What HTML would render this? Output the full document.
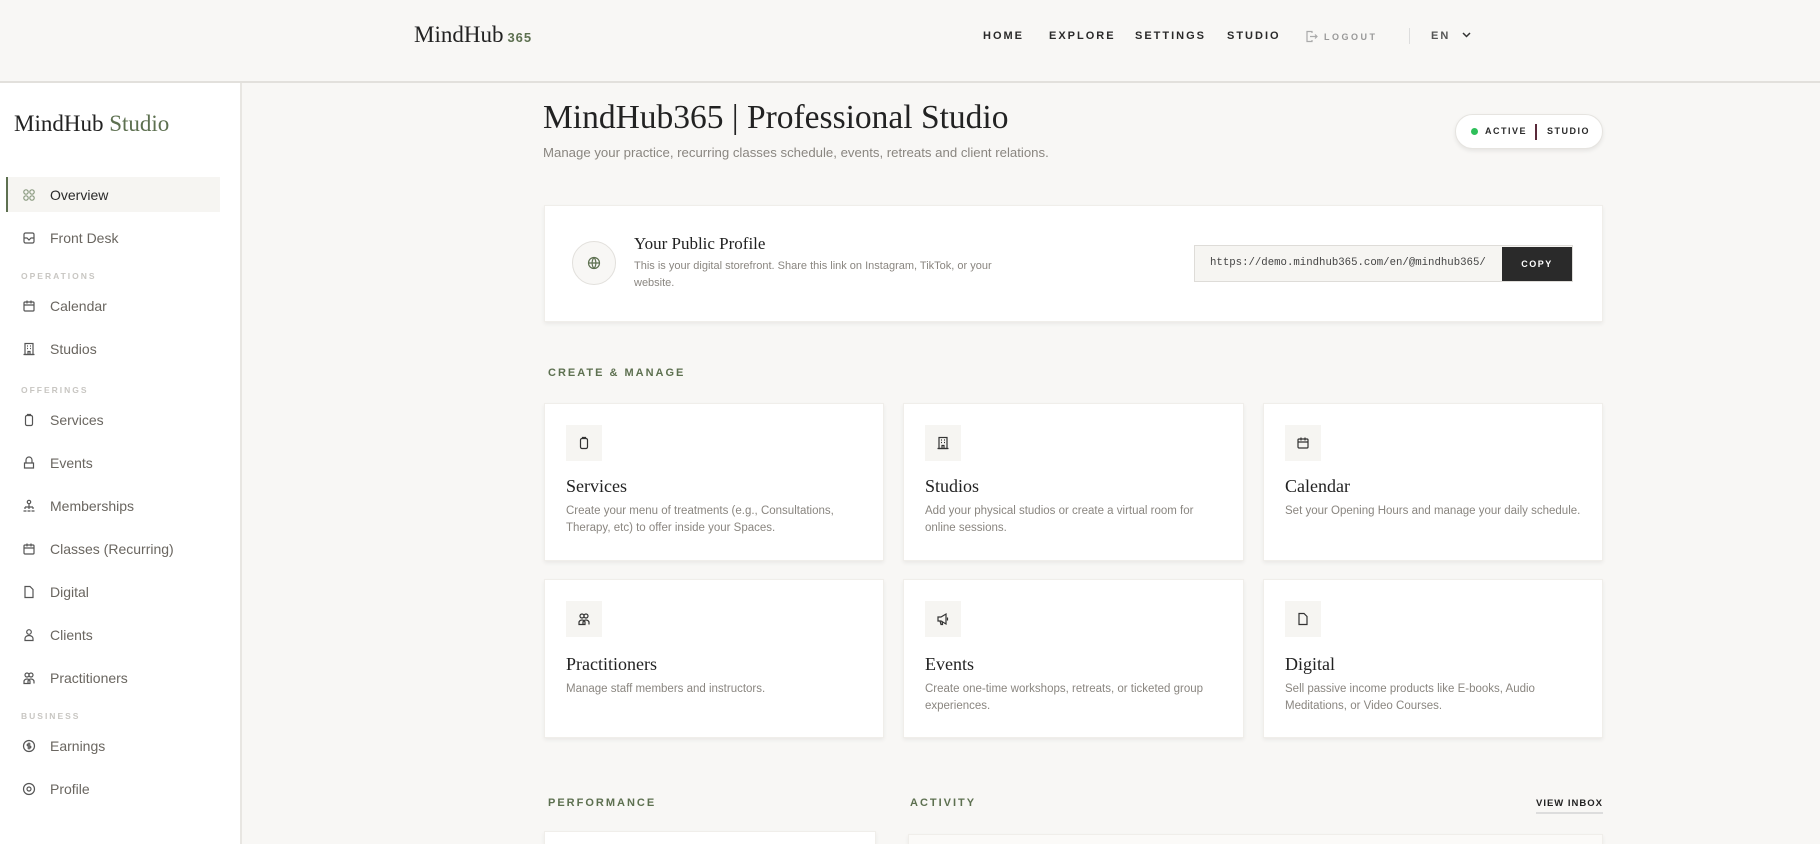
<!DOCTYPE html>
<html><head><meta charset="utf-8"><style>
*{margin:0;padding:0;box-sizing:border-box}
html,body{width:1820px;height:844px;overflow:hidden}
body{background:#f8f7f5;font-family:"Liberation Sans",sans-serif;color:#2a2a2a;position:relative}
.abs{position:absolute}
.hdr{left:0;top:0;width:1820px;height:83px;border-bottom:2px solid #e2e0dc;background:#f8f7f5}
.logo{left:414px;top:22px;font-family:"Liberation Serif",serif;font-size:23px;color:#222}
.logo span{font-family:"Liberation Sans",sans-serif;font-size:13px;color:#5d7050;font-weight:bold;letter-spacing:1px;margin-left:4px}
.nav{top:30px;font-size:11px;font-weight:bold;letter-spacing:2px;color:#2a2a2a}
.side{left:0;top:83px;width:242px;height:761px;background:#fff;border-right:2px solid #e8e6e2}
.brand{left:14px;top:111px;font-family:"Liberation Serif",serif;font-size:23px;color:#222}
.brand span{color:#5d7050}
.it{left:50px;font-size:14px;color:#6a6660}
.ic{left:22px;width:14px;height:14px}
.sec{left:21px;font-size:8.5px;letter-spacing:2px;color:#c8c6c2;font-weight:bold}
.card{background:#fff;box-shadow:0 2px 4px rgba(0,0,0,.06);border:1px solid #f0eeea}
.ibox{width:36px;height:36px;background:#f6f5f2;display:flex;align-items:center;justify-content:center}
.ct{font-family:"Liberation Serif",serif;font-size:18px;color:#222}
.cd{font-size:11.5px;color:#8a8680;line-height:17px}
.lbl{font-size:11px;font-weight:bold;letter-spacing:2px;color:#5d7050}
svg{fill:none;stroke:#555;stroke-width:1.2}
</style></head><body>
<div class="abs hdr"></div>
<div class="abs logo">MindHub<span>365</span></div>
<div class="abs nav" style="left:983px">HOME</div>
<div class="abs nav" style="left:1049px">EXPLORE</div>
<div class="abs nav" style="left:1135px">SETTINGS</div>
<div class="abs nav" style="left:1227px">STUDIO</div>
<svg class="abs" style="left:1305px;top:30px" width="13" height="13" viewBox="0 0 13 13"><path d="M7 3V1.5H2v10h5V10M5 6.5h7M10 4.5l2 2-2 2" stroke="#aaa"/></svg>
<div class="abs nav" style="left:1324px;top:32px;font-size:9px;color:#999;letter-spacing:2.5px">LOGOUT</div>
<div class="abs" style="left:1409px;top:28px;width:1px;height:16px;background:#ddd"></div>
<div class="abs nav" style="left:1431px;font-size:11px;color:#555">EN</div>
<svg class="abs" style="left:1462px;top:32px" width="9" height="6" viewBox="0 0 9 6"><path d="M1 1l3.5 3.5L8 1" stroke="#333" stroke-width="1.5"/></svg>

<div class="abs side"></div>
<div class="abs brand">MindHub <span>Studio</span></div>
<div class="abs" style="left:6px;top:177px;width:214px;height:35px;background:#f6f5f2;border-left:2px solid #5d7050"></div>
<svg class="abs ic" style="top:188px" viewBox="0 0 14 14"><circle cx="4" cy="4" r="2.2" stroke="#8a9a80"/><circle cx="10" cy="4" r="2.2" stroke="#8a9a80"/><circle cx="4" cy="10" r="2.2" stroke="#8a9a80"/><circle cx="10" cy="10" r="2.2" stroke="#8a9a80"/></svg>
<div class="abs it" style="top:187px;color:#2a2a2a">Overview</div>
<svg class="abs ic" style="top:231px" viewBox="0 0 14 14"><rect x="2" y="2" width="10" height="10" rx="1.5"/><path d="M2 7h3l2 2 2-2h3"/></svg>
<div class="abs it" style="top:230px">Front Desk</div>
<div class="abs sec" style="top:271px">OPERATIONS</div>
<svg class="abs ic" style="top:299px" viewBox="0 0 14 14"><rect x="2" y="3" width="10" height="9" rx="1"/><path d="M2 6h10M5 1.5v3M9 1.5v3"/></svg>
<div class="abs it" style="top:298px">Calendar</div>
<svg class="abs ic" style="top:342px" viewBox="0 0 14 14"><rect x="3" y="1.5" width="8" height="11"/><path d="M1.5 12.5h11M5 4h1M8 4h1M5 6.5h1M8 6.5h1M6 12.5v-3h2v3"/></svg>
<div class="abs it" style="top:341px">Studios</div>
<div class="abs sec" style="top:385px">OFFERINGS</div>
<svg class="abs ic" style="top:413px" viewBox="0 0 14 14"><rect x="3.5" y="2.5" width="7" height="10" rx="1.5"/><path d="M5.5 2.5V1.5h3v1"/></svg>
<div class="abs it" style="top:412px">Services</div>
<svg class="abs ic" style="top:456px" viewBox="0 0 14 14"><path d="M2.5 7h9v5h-9zM4 7V4a3 3 0 016 0v3"/></svg>
<div class="abs it" style="top:455px">Events</div>
<svg class="abs ic" style="top:499px" viewBox="0 0 14 14"><circle cx="7" cy="3" r="1.7"/><path d="M7 5v3M3 8h8M3 8v2M11 8v2M7 8v2M1.5 12h3M5.5 12h3M9.5 12h3"/></svg>
<div class="abs it" style="top:498px">Memberships</div>
<svg class="abs ic" style="top:542px" viewBox="0 0 14 14"><rect x="2" y="3" width="10" height="9" rx="1"/><path d="M2 6h10M5 1.5v3M9 1.5v3"/></svg>
<div class="abs it" style="top:541px">Classes (Recurring)</div>
<svg class="abs ic" style="top:585px" viewBox="0 0 14 14"><path d="M3 1.5h5l3 3v8H3z"/></svg>
<div class="abs it" style="top:584px">Digital</div>
<svg class="abs ic" style="top:628px" viewBox="0 0 14 14"><circle cx="7" cy="4" r="2.3"/><path d="M3 12.5v-2a4 3 0 018 0v2z"/></svg>
<div class="abs it" style="top:627px">Clients</div>
<svg class="abs ic" style="top:671px" viewBox="0 0 14 14"><circle cx="5" cy="4" r="2"/><circle cx="9" cy="4" r="2"/><path d="M2 12.5v-2a3 2.5 0 016 0v2zM6 12.5v-2a3 2.5 0 016 0v2"/></svg>
<div class="abs it" style="top:670px">Practitioners</div>
<div class="abs sec" style="top:711px">BUSINESS</div>
<svg class="abs ic" style="top:739px" viewBox="0 0 14 14"><circle cx="7" cy="7" r="5.5"/><path d="M8.5 5H6.2a1 1 0 000 2h1.6a1 1 0 010 2H5.5M7 3.5v7"/></svg>
<div class="abs it" style="top:738px">Earnings</div>
<svg class="abs ic" style="top:782px" viewBox="0 0 14 14"><circle cx="7" cy="7" r="5.5"/><circle cx="7" cy="7" r="2"/></svg>
<div class="abs it" style="top:781px">Profile</div>

<div class="abs" style="left:543px;top:99px;font-family:'Liberation Serif',serif;font-size:33.5px;color:#222">MindHub365 | Professional Studio</div>
<div class="abs" style="left:543px;top:145px;font-size:13.2px;color:#8a8680">Manage your practice, recurring classes schedule, events, retreats and client relations.</div>
<div class="abs" style="left:1455px;top:114px;width:148px;height:35px;background:#fff;border:1px solid #e6e4e0;border-radius:18px;box-shadow:0 2px 4px rgba(0,0,0,.08)"></div>
<div class="abs" style="left:1471px;top:128px;width:7px;height:7px;border-radius:50%;background:#2fbf5a"></div>
<div class="abs" style="left:1485px;top:126px;font-size:9px;font-weight:bold;letter-spacing:1.5px">ACTIVE</div>
<div class="abs" style="left:1535px;top:124px;width:1.5px;height:16px;background:#5a2a3a"></div>
<div class="abs" style="left:1547px;top:126px;font-size:9px;font-weight:bold;letter-spacing:1.5px">STUDIO</div>

<div class="abs card" style="left:544px;top:205px;width:1059px;height:117px"></div>
<div class="abs" style="left:572px;top:241px;width:44px;height:44px;border-radius:50%;border:1px solid #e2e0dc;background:#f8f7f5"></div>
<svg class="abs" style="left:587px;top:256px" width="14" height="14" viewBox="0 0 14 14"><circle cx="7" cy="7" r="5.5" stroke="#5d7050"/><path d="M1.5 7h11M7 1.5c-2.5 3-2.5 8 0 11M7 1.5c2.5 3 2.5 8 0 11" stroke="#5d7050"/></svg>
<div class="abs" style="left:634px;top:234px;font-family:'Liberation Serif',serif;font-size:17px;color:#222">Your Public Profile</div>
<div class="abs cd" style="left:634px;top:258px;width:400px;font-size:11px">This is your digital storefront. Share this link on Instagram, TikTok, or your website.</div>
<div class="abs" style="left:1194px;top:245px;width:379px;height:37px;border:1px solid #dedcd8;background:#f6f5f2"></div>
<div class="abs" style="left:1210px;top:257px;font-family:'Liberation Mono',monospace;font-size:10.7px;color:#444">https://demo.mindhub365.com/en/@mindhub365/</div>
<div class="abs" style="left:1502px;top:247px;width:70px;height:34px;background:#2a2a2a;color:#fff;font-size:9px;font-weight:bold;letter-spacing:1.5px;text-align:center;line-height:34px">COPY</div>

<div class="abs lbl" style="left:548px;top:367px">CREATE &amp; MANAGE</div>

<div class="abs card" style="left:544px;top:403px;width:340px;height:158px"></div>
<div class="abs card" style="left:903px;top:403px;width:341px;height:158px"></div>
<div class="abs card" style="left:1263px;top:403px;width:340px;height:158px"></div>
<div class="abs card" style="left:544px;top:579px;width:340px;height:159px"></div>
<div class="abs card" style="left:903px;top:579px;width:341px;height:159px"></div>
<div class="abs card" style="left:1263px;top:579px;width:340px;height:159px"></div>

<div class="abs ibox" style="left:566px;top:425px"><svg width="14" height="14" viewBox="0 0 14 14"><rect x="3.5" y="2.5" width="7" height="10" rx="1.5" stroke="#333"/><path d="M5.5 2.5V1.5h3v1" stroke="#333"/></svg></div>
<div class="abs ct" style="left:566px;top:476px">Services</div>
<div class="abs cd" style="left:566px;top:503px;width:300px">Create your menu of treatments (e.g., Consultations, Therapy, etc) to offer inside your Spaces.</div>

<div class="abs ibox" style="left:925px;top:425px"><svg width="14" height="14" viewBox="0 0 14 14"><rect x="3" y="1.5" width="8" height="11" stroke="#333"/><path d="M1.5 12.5h11M5 4h1M8 4h1M5 6.5h1M8 6.5h1M6 12.5v-3h2v3" stroke="#333"/></svg></div>
<div class="abs ct" style="left:925px;top:476px">Studios</div>
<div class="abs cd" style="left:925px;top:503px;width:300px">Add your physical studios or create a virtual room for online sessions.</div>

<div class="abs ibox" style="left:1285px;top:425px"><svg width="14" height="14" viewBox="0 0 14 14"><rect x="2" y="3" width="10" height="9" rx="1" stroke="#333"/><path d="M2 6h10M5 1.5v3M9 1.5v3" stroke="#333"/></svg></div>
<div class="abs ct" style="left:1285px;top:476px">Calendar</div>
<div class="abs cd" style="left:1285px;top:503px;width:300px">Set your Opening Hours and manage your daily schedule.</div>

<div class="abs ibox" style="left:566px;top:601px"><svg width="14" height="14" viewBox="0 0 14 14"><circle cx="5" cy="4" r="2" stroke="#333"/><circle cx="9" cy="4" r="2" stroke="#333"/><path d="M2 12.5v-2a3 2.5 0 016 0v2zM6 12.5v-2a3 2.5 0 016 0v2" stroke="#333"/></svg></div>
<div class="abs ct" style="left:566px;top:654px">Practitioners</div>
<div class="abs cd" style="left:566px;top:681px;width:300px">Manage staff members and instructors.</div>

<div class="abs ibox" style="left:925px;top:601px"><svg width="14" height="14" viewBox="0 0 14 14"><path d="M2 5h3l5-3v10l-5-3H2zM4 9l1 3.5h1.5L6 9M11.5 5.5v3" stroke="#333"/></svg></div>
<div class="abs ct" style="left:925px;top:654px">Events</div>
<div class="abs cd" style="left:925px;top:681px;width:300px">Create one-time workshops, retreats, or ticketed group experiences.</div>

<div class="abs ibox" style="left:1285px;top:601px"><svg width="14" height="14" viewBox="0 0 14 14"><path d="M3 1.5h5l3 3v8H3z" stroke="#333"/></svg></div>
<div class="abs ct" style="left:1285px;top:654px">Digital</div>
<div class="abs cd" style="left:1285px;top:681px;width:290px">Sell passive income products like E-books, Audio Meditations, or Video Courses.</div>

<div class="abs lbl" style="left:548px;top:797px">PERFORMANCE</div>
<div class="abs lbl" style="left:910px;top:797px">ACTIVITY</div>
<div class="abs" style="left:1536px;top:798px;font-size:9.5px;font-weight:bold;letter-spacing:1px;color:#222;border-bottom:2px solid #ddd;padding-bottom:3px">VIEW INBOX</div>
<div class="abs card" style="left:544px;top:831px;width:332px;height:13px;border-bottom:none"></div>
<div class="abs card" style="left:908px;top:834px;width:695px;height:10px;background:#fbfaf8;border-bottom:none"></div>
</body></html>
